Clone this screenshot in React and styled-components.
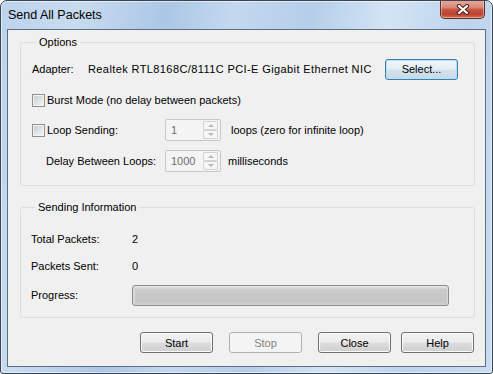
import React from 'react';
import styled, { createGlobalStyle, css } from 'styled-components';

const GlobalStyle = createGlobalStyle`
    html, body {
        margin: 0;
        padding: 0;
        background: #ffffff;
    }
    body {
        font-family: "Liberation Sans", Arial, sans-serif;
        font-size: 11px;
        color: #000;
    }
`;

const Window = styled.div`
    box-sizing: border-box;
    width: 493px;
    height: 374px;
    display: flex;
    flex-direction: column;
    border: 1px solid #3a4554;
    border-radius: 7px 7px 3px 3px;
    background: linear-gradient(100deg, #bcd3ec 0%, #c8dbf0 14%, #abc7e5 30%, #c3d8ef 42%, #b5cee9 56%, #d3e4f4 70%, #bdd4ec 84%, #c9dcf0 100%);
    box-shadow: inset 0 0 0 1px rgba(255, 255, 255, 0.55);
    overflow: hidden;
`;

const TitleBar = styled.div`
    height: 28px;
    flex: none;
    display: flex;
    align-items: flex-start;
    padding-left: 7px;
    padding-right: 7px;
`;

const Title = styled.div`
    flex: 1;
    font-family: "Liberation Sans", Arial, sans-serif;
    font-size: 12.5px;
    line-height: 14px;
    margin-top: 7px;
    color: #000;
`;

const CloseButton = styled.div`
    width: 45px;
    height: 19px;
    margin-top: -1px;
    box-sizing: border-box;
    border: 1px solid #5b2b25;
    border-top: none;
    border-radius: 0 0 5px 5px;
    background: linear-gradient(#e9a99b 0%, #d98a7a 40%, #c4503f 55%, #c1412f 80%, #d2704f 100%);
    box-shadow: inset 0 0 0 1px rgba(255, 220, 210, 0.5);
    display: flex;
    align-items: center;
    justify-content: center;
`;

const ClientWrap = styled.div`
    flex: 1;
    display: flex;
    padding: 0 6px 6px;
`;

const Client = styled.div`
    flex: 1;
    border: 1px solid #5d6d82;
    background: #f0f0f0;
    padding: 5px 10px 0 12px;
    display: flex;
    flex-direction: column;
`;

const Group = styled.fieldset`
    margin: ${p => p.$top || 0}px 0 0;
    padding: 0 ${p => p.$right || 0}px ${p => p.$bottom || 0}px ${p => p.$left || 0}px;
    border: 1px solid #d5dfe5;
    border-radius: 3px;
    min-width: 0;
`;

const Legend = styled.legend`
    margin-left: 4px;
    padding: 0 3px;
    height: 14px;
    line-height: 14px;
    font-size: 11px;
`;

const Row = styled.div`
    display: flex;
    align-items: center;
    height: ${p => p.$h}px;
    margin-top: ${p => p.$mt}px;
    line-height: 13px;
`;

const Label = styled.span`
    flex: none;
    width: ${p => (p.$w ? `${p.$w}px` : 'auto')};
    padding-left: ${p => p.$pad || 0}px;
    box-sizing: border-box;
    margin-left: ${p => p.$ml || 0}px;
`;

const CheckLabel = styled.label`
    display: flex;
    align-items: center;
    width: ${p => (p.$w ? `${p.$w}px` : 'auto')};
    flex: none;
`;

const CheckBox = styled.span`
    width: 13px;
    height: 13px;
    box-sizing: border-box;
    border: 1px solid #8e8f8f;
    background: linear-gradient(135deg, #c6c9ce 0%, #e2e3e5 55%, #f6f6f6 100%);
    box-shadow: inset 0 0 0 1px #f4f4f4;
    margin-right: 2px;
    flex: none;
`;

const SpinBox = styled.div`
    width: 56px;
    height: ${p => p.$h}px;
    box-sizing: border-box;
    border: 1px solid #c7c7c7;
    border-radius: 2px;
    background: #f4f4f4;
    display: flex;
    align-items: center;
    padding: 1px 2px 1px 5px;
    flex: none;
`;

const SpinValue = styled.span`
    flex: 1;
    color: #6d6d6d;
`;

const SpinArrows = styled.div`
    width: 15px;
    height: 100%;
    display: flex;
    flex-direction: column;
`;

const SpinArrow = styled.div`
    flex: 1;
    box-sizing: border-box;
    border: 1px solid #d3d3d3;
    border-radius: 1px;
    background: #f6f6f6;
    display: flex;
    align-items: center;
    justify-content: center;
    &::before {
        content: '';
        border-left: 3px solid transparent;
        border-right: 3px solid transparent;
        ${p => (p.$down
            ? css`border-top: 3px solid #b8b8b8;`
            : css`border-bottom: 3px solid #b8b8b8;`)}
    }
`;

const Button = styled.div`
    width: 73px;
    height: 21px;
    box-sizing: border-box;
    border-radius: 3px;
    font-family: "Liberation Sans", Arial, sans-serif;
    font-size: 11px;
    display: flex;
    align-items: center;
    justify-content: center;
    flex: none;
    margin-left: ${p => (p.$auto ? 'auto' : `${p.$ml || 0}px`)};
    border: 1px solid #707070;
    color: #000;
    background: linear-gradient(#f3f3f3 0%, #ebebeb 48%, #dddddd 52%, #cfcfcf 100%);
    box-shadow: inset 0 0 0 1px #fbfbfb;

    ${p => p.$default && css`
        border-color: #3c7fb1;
        background: linear-gradient(#f0f6fb 0%, #e4eef6 48%, #d5e3ee 52%, #cad9e6 100%);
        box-shadow: inset 0 0 0 1px #b6e2f8;
    `}

    ${p => p.$disabled && css`
        border-color: #adb2b5;
        color: #838383;
        background: #f4f4f4;
        box-shadow: none;
    `}
`;

const Value = styled.span`
    flex: none;
    letter-spacing: ${p => p.$spacing || 0}px;
`;

const Progress = styled.div`
    width: 317px;
    height: 21px;
    box-sizing: border-box;
    border: 1px solid #8d8d8d;
    border-radius: 3px;
    background: linear-gradient(#e8e8e8 0%, #cacaca 20%, #c5c5c5 80%, #d2d2d2 100%);
    box-shadow: inset 1px 0 0 #dadada, inset -1px 0 0 #dadada, inset 3px 0 2px -1px #d9d9d9;
`;

const ButtonBar = styled.div`
    display: flex;
    justify-content: flex-end;
    margin-top: 14px;
    padding-right: 1px;
`;

function Spin(props) {
    return (
        <SpinBox $h={props.h}>
            <SpinValue>{props.value}</SpinValue>
            <SpinArrows>
                <SpinArrow />
                <SpinArrow $down />
            </SpinArrows>
        </SpinBox>
    );
}

export default function App() {
    return (
        <>
            <GlobalStyle />
            <Window>
                <TitleBar>
                    <Title>Send All Packets</Title>
                    <CloseButton>
                        <svg width="14" height="11" viewBox="0 0 14 11">
                            <path d="M3 2 L11 9 M11 2 L3 9" stroke="#4a1f1a" strokeWidth="4.2" strokeLinecap="round" fill="none" />
                            <path d="M3 2 L11 9 M11 2 L3 9" stroke="#ffffff" strokeWidth="2.2" strokeLinecap="round" fill="none" />
                        </svg>
                    </CloseButton>
                </TitleBar>
                <ClientWrap>
                    <Client>
                        <Group $left={11} $right={16} $bottom={13}>
                            <Legend>Options</Legend>
                            <Row $h={21} $mt={10}>
                                <Label $w={56}>Adapter:</Label>
                                <Value $spacing={0.4}>Realtek RTL8168C/8111C PCI-E Gigabit Ethernet NIC</Value>
                                <Button $default $auto>Select...</Button>
                            </Row>
                            <Row $h={13} $mt={14}>
                                <CheckLabel>
                                    <CheckBox />
                                    Burst Mode (no delay between packets)
                                </CheckLabel>
                            </Row>
                            <Row $h={22} $mt={12}>
                                <CheckLabel $w={133}>
                                    <CheckBox />
                                    Loop Sending:
                                </CheckLabel>
                                <Spin h={22} value="1" />
                                <Label $ml={10}>loops (zero for infinite loop)</Label>
                            </Row>
                            <Row $h={22} $mt={9}>
                                <Label $w={133} $pad={14}>Delay Between Loops:</Label>
                                <Spin h={22} value="1000" />
                                <Label $ml={7}>milliseconds</Label>
                            </Row>
                        </Group>
                        <Group $top={14} $left={10} $bottom={11}>
                            <Legend>Sending Information</Legend>
                            <Row $h={14} $mt={18}>
                                <Label $w={101}>Total Packets:</Label>
                                <Value>2</Value>
                            </Row>
                            <Row $h={14} $mt={13}>
                                <Label $w={101}>Packets Sent:</Label>
                                <Value>0</Value>
                            </Row>
                            <Row $h={21} $mt={12}>
                                <Label $w={101}>Progress:</Label>
                                <Progress />
                            </Row>
                        </Group>
                        <ButtonBar>
                            <Button>Start</Button>
                            <Button $disabled $ml={16}>Stop</Button>
                            <Button $ml={16}>Close</Button>
                            <Button $ml={10}>Help</Button>
                        </ButtonBar>
                    </Client>
                </ClientWrap>
            </Window>
        </>
    );
}
